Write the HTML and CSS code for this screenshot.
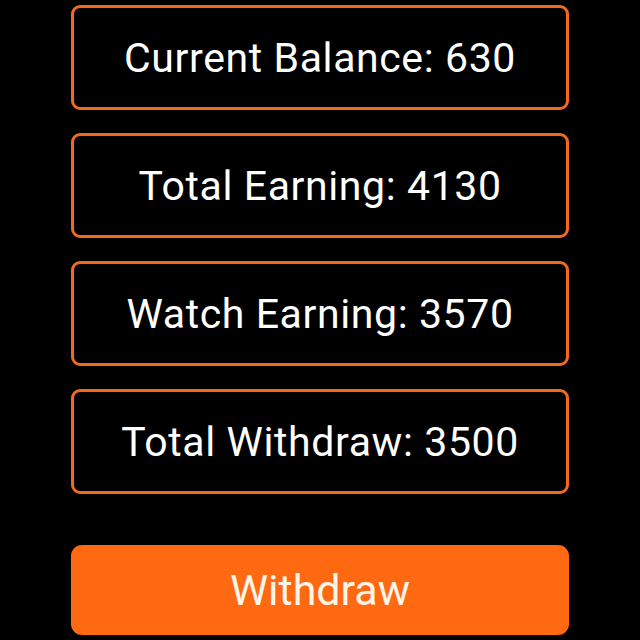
FILE: index.html
```html
<!DOCTYPE html>
<html>
<head>
<meta charset="utf-8">
<link rel="stylesheet" href="styles.css">
</head>
<body>
<main class="stats">
  <div class="stat">Current Balance: 630</div>
  <div class="stat">Total Earning: 4130</div>
  <div class="stat">Watch Earning: 3570</div>
  <div class="stat">Total Withdraw: 3500</div>
  <button class="withdraw">Withdraw</button>
</main>
</body>
</html>
```
FILE: styles.css
```css
html, body {
  margin: 0;
  background: #000;
}
body {
  font-family: Roboto, "Noto Sans", sans-serif;
}
.stats {
  display: flex;
  flex-direction: column;
  gap: 23px;
  padding: 5px 71px 0;
}
.stat {
  box-sizing: border-box;
  height: 105px;
  border: 3px solid #f06a20;
  border-radius: 9px;
  color: #fff;
  font-size: 41px;
  letter-spacing: 0.6px;
  display: flex;
  align-items: center;
  justify-content: center;
}
.withdraw {
  margin-top: 28px;
  height: 90px;
  border: none;
  border-radius: 11px;
  background: #ff6912;
  color: #fff5e8;
  font-family: Roboto, "Noto Sans", sans-serif;
  font-size: 43px;
}
```
